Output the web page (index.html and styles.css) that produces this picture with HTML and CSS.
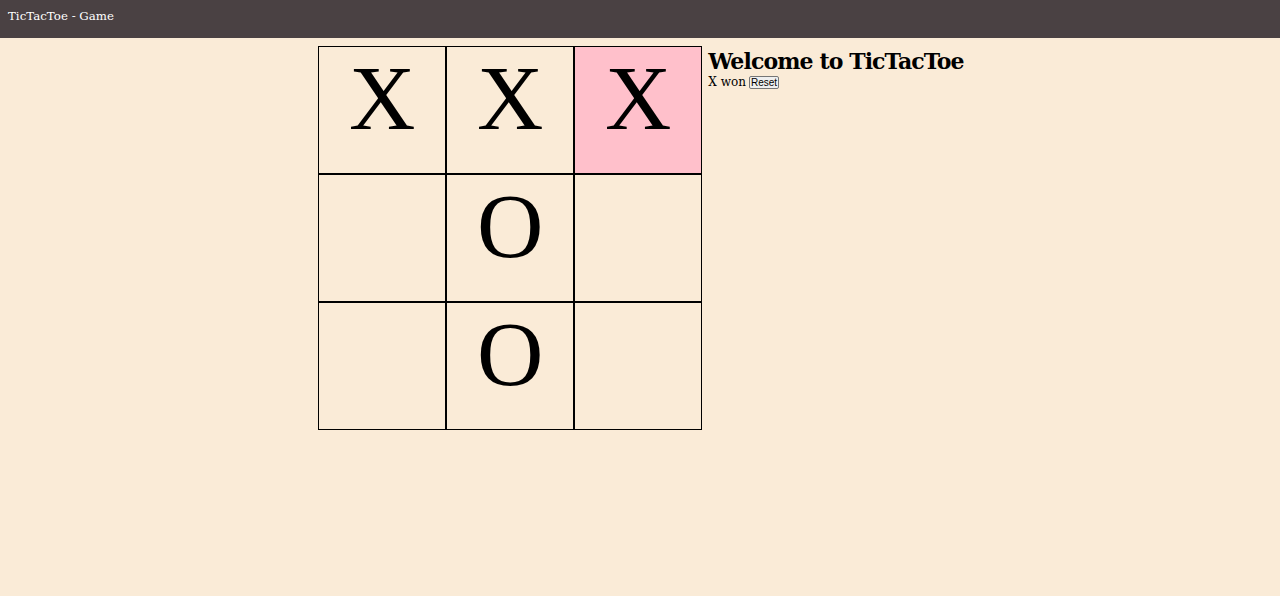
FILE: index.html
```html
<!DOCTYPE html>
<html>
<head>
<meta charset="utf-8">
<title>TicTacToe - Game</title>
<link rel="stylesheet" href="styles.css">
</head>
<body>
<header class="topbar">TicTacToe - Game</header>
<main class="game">
  <div class="board">
    <div class="cell">X</div>
    <div class="cell">X</div>
    <div class="cell win">X</div>
    <div class="cell"></div>
    <div class="cell">O</div>
    <div class="cell"></div>
    <div class="cell"></div>
    <div class="cell">O</div>
    <div class="cell"></div>
  </div>
  <section class="info">
    <h1 class="title">Welcome to TicTacToe</h1>
    <div class="status">X won <button class="reset">Reset</button></div>
  </section>
</main>
</body>
</html>
```
FILE: styles.css
```css
html, body {
  margin: 0;
  padding: 0;
}
body {
  background: #faebd7;
  font-family: "DejaVu Serif", "Liberation Serif", serif;
  color: #000;
  height: 596px;
}
.topbar {
  background: #4a4143;
  color: #fff;
  height: 38px;
  box-sizing: border-box;
  padding: 9px 8px 0;
  font-size: 11.8px;
  line-height: 15px;
}
.game {
  margin: 8px 0 0;
  padding-left: 2px;
  display: flex;
  justify-content: center;
  align-items: flex-start;
  gap: 6px;
}
.board {
  display: grid;
  grid-template-columns: repeat(3, 128px);
  grid-template-rows: repeat(3, 128px);
  flex: none;
}
.cell {
  box-sizing: border-box;
  border: 1px solid #000;
  font-family: "Liberation Serif", "Times New Roman", serif;
  font-size: 92px;
  line-height: 102px;
  text-align: center;
}
.cell.win {
  background: #ffc0cb;
}
.info {
  display: flex;
  flex-direction: column;
  white-space: nowrap;
  padding-top: 3px;
}
.title {
  margin: 0;
  font-size: 22px;
  line-height: 24px;
  font-weight: bold;
  letter-spacing: -0.9px;
}
.status {
  font-size: 12px;
  line-height: 14px;
  margin-top: 2px;
  display: flex;
  align-items: center;
  gap: 3px;
}
.reset {
  font-family: "Liberation Sans", Arial, sans-serif;
  font-size: 10px;
  line-height: 11px;
  padding: 0 1px;
  margin: 0;
  border: 1px solid #767676;
  border-radius: 2px;
  background: #efefef;
  color: #000;
}
```
